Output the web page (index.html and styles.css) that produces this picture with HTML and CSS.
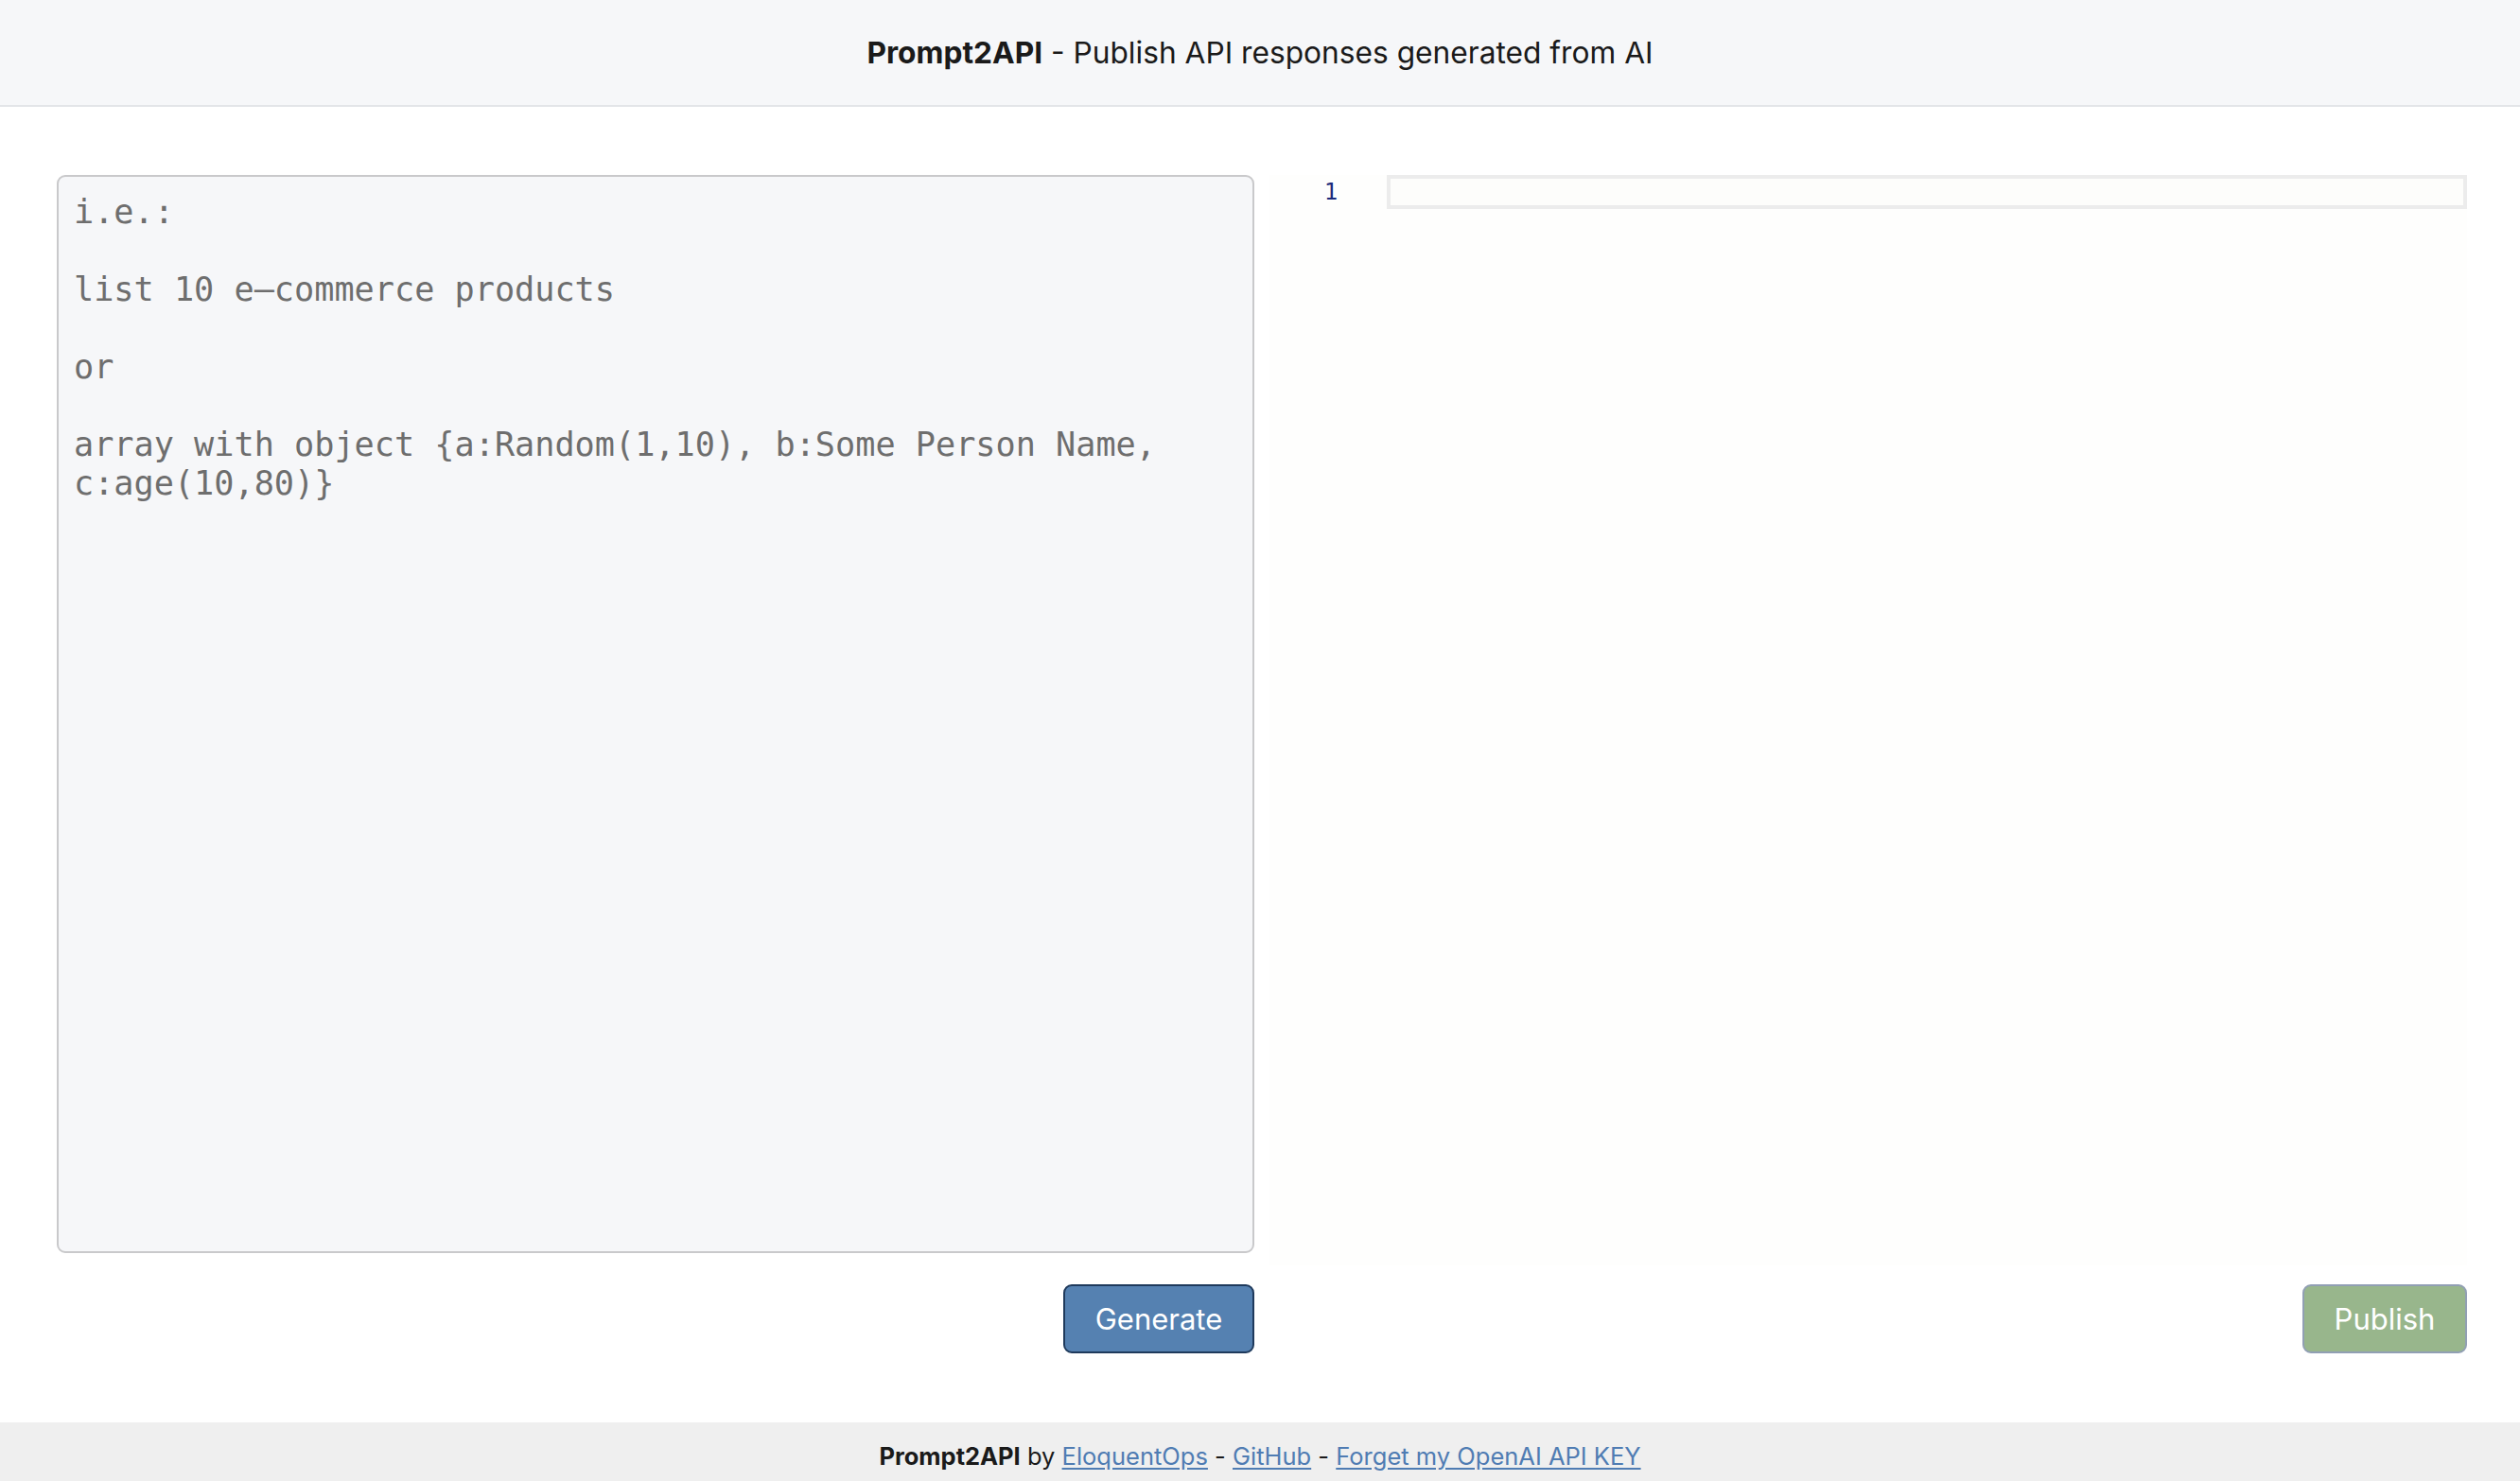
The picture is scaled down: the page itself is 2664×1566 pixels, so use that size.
FILE: index.html
```html
<!DOCTYPE html>
<html lang="en">
<head>
<meta charset="utf-8">
<title>Prompt2API</title>
<link rel="stylesheet" href="styles.css">
</head>
<body>
<div class="page">
  <header class="topbar">
    <h1 class="title"><strong>Prompt2API</strong> - Publish API responses generated from AI</h1>
  </header>
  <main class="workspace">
    <section class="column">
      <textarea class="prompt" placeholder="i.e.:&#10;&#10;list 10 e&#8211;commerce products&#10;&#10;or&#10;&#10;array with object {a:Random(1,10), b:Some Person Name, c:age(10,80)}"></textarea>
      <div class="actions actions-left">
        <button class="btn btn-generate" type="button">Generate</button>
      </div>
    </section>
    <section class="column">
      <div class="editor">
        <div class="gutter"><span class="lineno">1</span></div>
        <div class="lines"><div class="active-line"></div></div>
      </div>
      <div class="actions actions-right">
        <button class="btn btn-publish" type="button" disabled>Publish</button>
      </div>
    </section>
  </main>
  <footer class="footer">
    <strong>Prompt2API</strong> by <a href="#">EloquentOps</a> - <a href="#">GitHub</a> - <a href="#">Forget my OpenAI API KEY</a>
  </footer>
</div>
</body>
</html>
```
FILE: styles.css
```css
* { box-sizing: border-box; }
html, body { margin: 0; padding: 0; }
body {
  font-family: Inter, "Liberation Sans", Arial, sans-serif;
  color: #1a1a1a;
  background: #ffffff;
}
.page {
  min-height: 100vh;
  display: flex;
  flex-direction: column;
}
.topbar {
  height: 113px;
  background: #f6f7f9;
  border-bottom: 2px solid #e3e5e8;
  display: flex;
  align-items: center;
  justify-content: center;
}
.title {
  margin: 0;
  font-size: 31.7px;
  font-weight: 400;
  color: #1a1a1a;
  padding-bottom: 0;
}
.title strong { font-weight: 700; }
.workspace {
  flex: 1;
  display: grid;
  grid-template-columns: 1266px 1266px;
  column-gap: 16px;
  padding: 72px 56px 0 60px;
  align-items: start;
}
.column {
  display: flex;
  flex-direction: column;
}
.prompt {
  display: block;
  width: 100%;
  height: 1140px;
  margin: 0;
  padding: 16px;
  border: 2px solid #c9c9cb;
  border-radius: 9px;
  background: #f6f7f9;
  font-family: "DejaVu Sans Mono", "Liberation Mono", monospace;
  font-size: 35.2px;
  line-height: 41px;
  color: #333;
  resize: none;
  outline: none;
}
.prompt::placeholder { color: #6e6e6e; opacity: 1; }
.actions {
  display: flex;
  justify-content: flex-end;
}
.actions-left { margin-top: 33px; }
.actions-right { margin-top: 20px; }
.btn {
  font-family: Inter, "Liberation Sans", Arial, sans-serif;
  font-size: 31px;
  height: 73px;
  padding: 0;
  border-radius: 9px;
  color: #ffffff;
  cursor: pointer;
}
.btn-generate {
  width: 202px;
  background: #5581b1;
  border: 2px solid #1f3a5c;
}
.btn-publish {
  width: 174px;
  background: #98b68c;
  border: 2px solid #919fb4;
}
.editor {
  height: 1153px;
  background: #fefefd;
  display: flex;
}
.gutter {
  width: 124px;
  display: flex;
  justify-content: center;
  padding-top: 0;
}
.lineno {
  font-family: "DejaVu Sans Mono", "Liberation Mono", monospace;
  font-size: 24px;
  line-height: 36px;
  height: 36px;
  color: #1b2a7a;
  padding-left: 6px;
}
.lines { flex: 1; }
.active-line {
  height: 36px;
  border: 4px solid #ececec;
  background: #fdfdfb;
}
.footer {
  height: 62px;
  margin-top: 73px;
  background: #efefef;
  display: flex;
  align-items: center;
  justify-content: center;
  font-size: 25.5px;
  color: #1a1a1a;
  padding-top: 8px;
  white-space: pre;
}
.footer strong { font-weight: 700; }
.footer a {
  color: #4f7cb3;
  text-decoration: underline;
  text-underline-offset: 3px;
}
```
